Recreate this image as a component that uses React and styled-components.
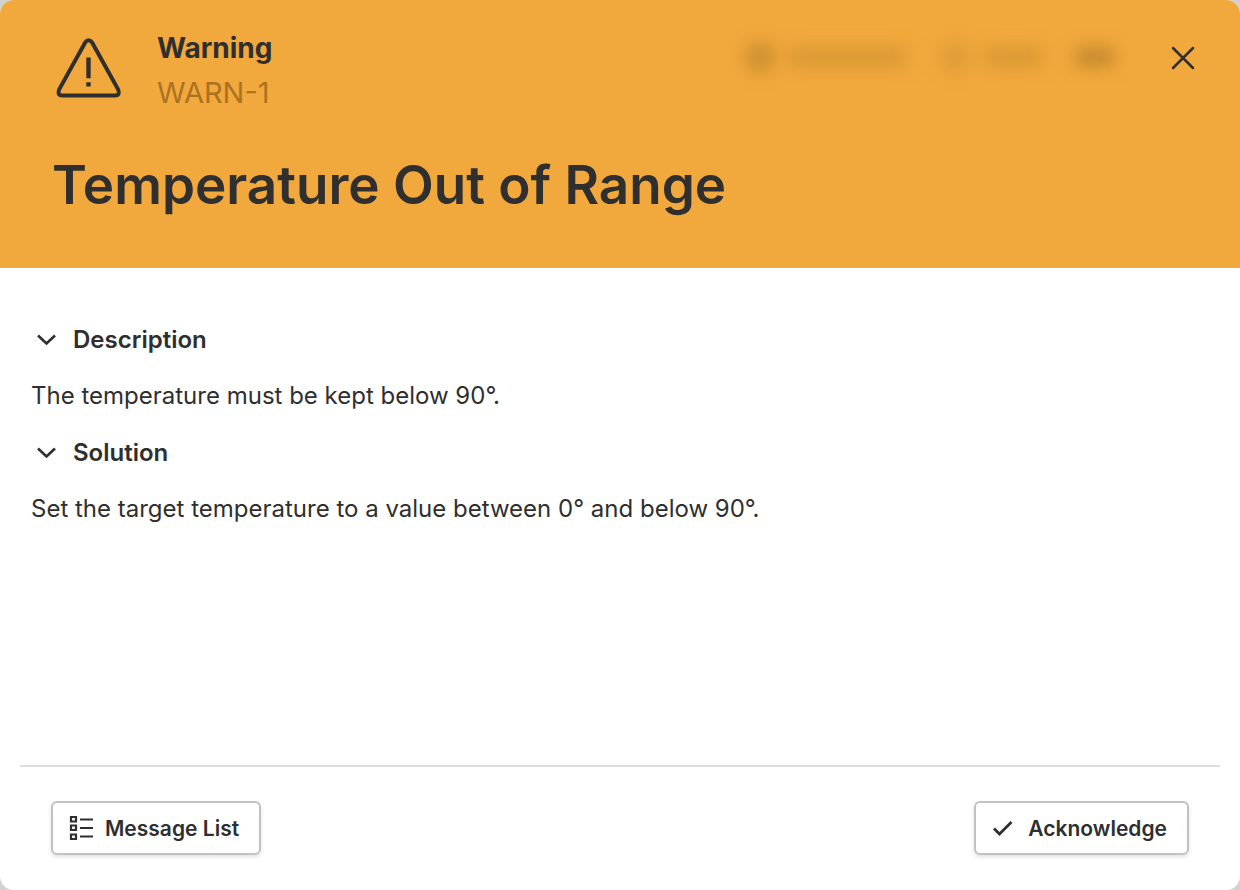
import React, { useState } from "react";
import styled, { createGlobalStyle } from "styled-components";

const GlobalStyle = createGlobalStyle`
    * {
        box-sizing: border-box;
    }

    body {
        margin: 0;
        background: #d2d2d2;
        color: #2f2f2f;
        font-family: Inter, "Liberation Sans", sans-serif;
    }

    button {
        color: inherit;
        font-family: inherit;
    }
`

const Dialog = styled.section`
    display: flex;
    flex-direction: column;
    min-height: 100vh;
    border-radius: 14px;
    overflow: hidden;
    background: #fff;
`

const Header = styled.header`
    background: #f1a83c;
    padding: 28px 40px 52px 52px;
`

const HeaderTop = styled.div`
    display: flex;
    align-items: flex-start;
`

const WarningIcon = styled.svg`
    width: 72px;
    height: 72px;
    margin-top: 4px;
    flex: none;
`

const Kind = styled.div`
    margin-left: 33px;
    font-size: 28px;
    font-weight: 700;
    line-height: 40px;
`

const Code = styled.div`
    font-size: 29px;
    font-weight: 400;
    line-height: 50px;
    color: #ab7222;
`

const Meta = styled.div`
    display: flex;
    align-items: center;
    height: 58px;
    margin-left: auto;
    margin-right: 52px;
    filter: blur(8px);
`

const MetaIcon = styled.span`
    width: 32px;
    height: 32px;
    margin-right: 12px;
    border-radius: 50%;
    background: ${props => props.$color};
`

const MetaText = styled.span`
    width: ${props => props.$width};
    height: 20px;
    margin-right: ${props => props.$gap || "0"};
    background: ${props => props.$color};
`

const CloseButton = styled.button`
    display: flex;
    align-items: center;
    justify-content: center;
    width: 34px;
    height: 60px;
    padding: 0;
    border: 0;
    background: none;
    cursor: pointer;
`

const Title = styled.h1`
    margin: 36px 0 0;
    font-size: 53px;
    font-weight: 600;
    line-height: 62px;
`

const Content = styled.main`
    flex: 1;
    padding: 43px 31px;
`

const SectionTitle = styled.h2`
    margin: 0;
    font-size: 24px;
`

const SectionToggle = styled.button`
    display: flex;
    align-items: center;
    gap: 12px;
    height: 57px;
    padding: 0;
    border: 0;
    background: none;
    font-size: 24px;
    font-weight: 600;
    cursor: pointer;
`

const Chevron = styled.svg`
    width: 30px;
    height: 24px;
    transform: ${props => props.$open ? "none" : "rotate(-90deg)"};
`

const SectionText = styled.p`
    margin: 0;
    font-size: 24px;
    line-height: 56px;
`

const Footer = styled.footer`
    display: flex;
    justify-content: space-between;
    margin: 0 20px;
    padding: 34px 31px 35px;
    border-top: 2px solid #dcdcdc;
`

const FooterButton = styled.button`
    display: flex;
    align-items: center;
    gap: 11px;
    height: 54px;
    padding: 0 20px 0 15px;
    border: 2px solid #c2c2c2;
    border-radius: 6px;
    background: #fff;
    box-shadow: 0 2px 4px rgba(0, 0, 0, 0.12);
    font-size: 21px;
    font-weight: 600;
    cursor: pointer;
`

const ButtonIcon = styled.svg`
    width: 26px;
    height: 26px;
`

function Section(props) {
    const [open, setOpen] = useState(true)

    return (
        <section>
            <SectionTitle>
                <SectionToggle aria-expanded={open} onClick={() => setOpen(!open)}>
                    <Chevron $open={open} viewBox="0 0 30 24" fill="none" stroke="currentColor" strokeWidth="2.6">
                        <path d="M7 7.5 15.5 15.5 24 7.5" />
                    </Chevron>
                    {props.title}
                </SectionToggle>
            </SectionTitle>
            {open && <SectionText>{props.children}</SectionText>}
        </section>
    )
}

function App() {
    return (
        <>
            <GlobalStyle />
            <Dialog role="dialog" aria-labelledby="message-title">
                <Header>
                    <HeaderTop>
                        <WarningIcon viewBox="0 0 72 72" fill="none" stroke="currentColor">
                            <path d="M33.2 10.5 7.2 57.4Q4.8 63.2 10.2 63.4H63.1Q68.5 63.2 66.1 57.4L40.1 10.5Q36.6 5.9 33.2 10.5Z" strokeWidth="4" strokeLinejoin="round" />
                            <path d="M36.5 25.5V46.3M36.5 50.3V54.6" strokeWidth="4.4" />
                        </WarningIcon>
                        <Kind>
                            Warning
                            <Code>WARN-1</Code>
                        </Kind>
                        <Meta aria-hidden="true">
                            <MetaIcon $color="#cf9232" />
                            <MetaText $width="118px" $gap="34px" $color="#da9935" />
                            <MetaIcon $color="#df9d37" />
                            <MetaText $width="58px" $gap="34px" $color="#da9935" />
                            <MetaText $width="38px" $color="#c68b30" />
                        </Meta>
                        <CloseButton aria-label="Close">
                            <svg width="24" height="24" viewBox="0 0 24 24" stroke="currentColor" strokeWidth="2.5" strokeLinecap="round">
                                <path d="M2 2 22 22M22 2 2 22" />
                            </svg>
                        </CloseButton>
                    </HeaderTop>
                    <Title id="message-title">Temperature Out of Range</Title>
                </Header>
                <Content>
                    <Section title="Description">The temperature must be kept below 90°.</Section>
                    <Section title="Solution">Set the target temperature to a value between 0° and below 90°.</Section>
                </Content>
                <Footer>
                    <FooterButton>
                        <ButtonIcon viewBox="0 0 26 26" fill="none" stroke="currentColor" strokeWidth="2.2">
                            <path d="M3 2H8V6.5H3ZM3 10.5H8V15H3ZM3 19.5H8V24H3Z" />
                            <path d="M12 4.5H25M12 13H25M12 21.5H25" />
                        </ButtonIcon>
                        Message List
                    </FooterButton>
                    <FooterButton>
                        <ButtonIcon viewBox="0 0 26 26" fill="none" stroke="currentColor" strokeWidth="2.8">
                            <path d="M3 13.5 8.5 19 20.5 7" />
                        </ButtonIcon>
                        Acknowledge
                    </FooterButton>
                </Footer>
            </Dialog>
        </>
    )
}

export default App;
